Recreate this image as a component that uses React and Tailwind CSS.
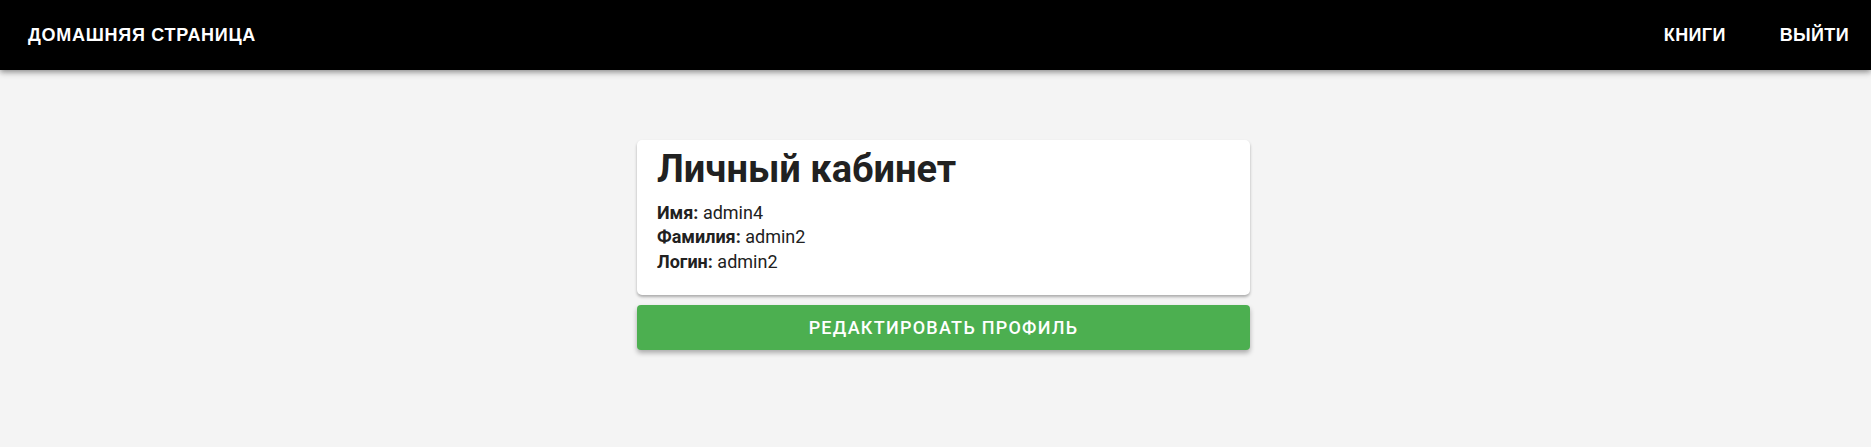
import React from "react";

const user = { firstName: "admin4", lastName: "admin2", login: "admin2" };

const App = () => {
  return (
    <div className="min-h-[447px] bg-[#f4f4f4] font-['Roboto',sans-serif]">
      <header className="h-[70px] bg-black flex items-center justify-between pl-[28px] pr-[22px] shadow-[0_2px_6px_rgba(0,0,0,0.45)] relative">
        <a className="text-white font-['Liberation_Sans',Arial,sans-serif] font-bold text-[18px] tracking-[0.04em] uppercase">
          Домашняя страница
        </a>
        <nav className="flex gap-[54px] font-['Liberation_Sans',Arial,sans-serif] font-bold text-[18px] tracking-[0.02em] text-white uppercase">
          <a>Книги</a>
          <a>Выйти</a>
        </nav>
      </header>

      <main className="pt-[70px] pl-[637px]">
        <div className="w-[613px]">
          <div className="bg-white rounded-[5px] shadow-[0_2px_3px_rgba(0,0,0,0.3)] px-5 pt-[7px] pb-[21px] text-[#212121]">
            <h1 className="text-[38px] font-bold leading-[1.2]">Личный кабинет</h1>
            <div className="mt-[8px] text-[18px] leading-[24.5px]">
              <p>
                <span className="font-bold">Имя:</span> {user.firstName}
              </p>
              <p>
                <span className="font-bold">Фамилия:</span> {user.lastName}
              </p>
              <p>
                <span className="font-bold">Логин:</span> {user.login}
              </p>
            </div>
          </div>
          <button className="mt-[10px] w-full h-[45px] bg-[#4caf50] rounded-[4px] text-white uppercase font-medium text-[18px] tracking-[0.07em] shadow-[0_3px_5px_rgba(0,0,0,0.3)]">
            Редактировать профиль
          </button>
        </div>
      </main>
    </div>
  );
};

export default App;
